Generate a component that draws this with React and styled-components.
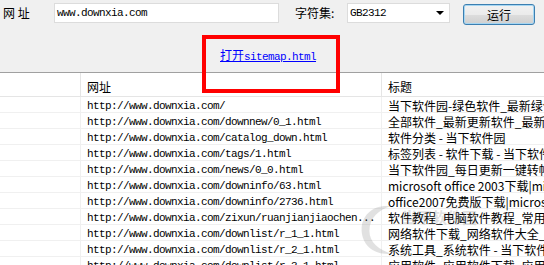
import styled, { createGlobalStyle } from 'styled-components'

const GlobalStyle = createGlobalStyle`
  html, body {
    margin: 0;
    padding: 0;
    background: #ffffff;
    overflow: hidden;
  }
`

const mono = `"Liberation Mono", "Noto Sans CJK SC", monospace`
const cjk = `"Noto Sans CJK SC", "Liberation Sans", sans-serif`

const Window = styled.div`
  position: relative;
  width: 544px;
  height: 265px;
  overflow: hidden;
  font-family: ${cjk};
  font-size: 12px;
  color: #000;
`

const TopArea = styled.div`
  background: #f0f0f0;
  height: 72px;
  display: flex;
  flex-direction: column;
`

const Toolbar = styled.div`
  display: flex;
  align-items: flex-start;
  padding: 3px 0 0 3px;
  height: 21px;
`

const Label = styled.span`
  width: ${(p) => p.w}px;
  flex-shrink: 0;
  line-height: 20px;
  font-size: 12px;
  white-space: pre;
`

const TextBox = styled.div`
  box-sizing: border-box;
  width: 225px;
  height: 20px;
  background: #fff;
  border: 1px solid #dcdcdc;
  padding-left: 2px;
  font-family: ${mono};
  font-size: 11px;
  letter-spacing: -0.6px;
  line-height: 18px;
  margin-right: 16px;
`

const Select = styled.div`
  box-sizing: border-box;
  width: 103px;
  height: 20px;
  background: #fff;
  border: 1px solid #dcdcdc;
  display: flex;
  align-items: center;
  justify-content: space-between;
  padding: 0 5px 0 2px;
  font-family: ${mono};
  font-size: 11px;
  letter-spacing: -0.6px;
  margin-right: 13px;
`

const Arrow = styled.span`
  width: 0;
  height: 0;
  border-left: 4px solid transparent;
  border-right: 4px solid transparent;
  border-top: 4px solid #000;
`

const Button = styled.button`
  box-sizing: border-box;
  width: 72px;
  height: 21px;
  margin-top: 1px;
  border: 1px solid #3c7fb1;
  border-radius: 3px;
  background: linear-gradient(#f2f2f2 0%, #ebebeb 50%, #dddddd 51%, #cfcfcf 100%);
  box-shadow: inset 0 0 0 1px #a6d6f2;
  font-family: ${cjk};
  font-size: 12px;
  padding: 0;
  color: #000;
`

const LinkRow = styled.div`
  padding: 22px 0 0 220px;
`

const Link = styled.a`
  color: #0000ff;
  text-decoration: underline;
  font-family: ${mono};
  font-size: 11px;
  letter-spacing: -0.6px;
  line-height: 14px;
  cursor: pointer;
`

const Cjk = styled.span`
  font-family: ${cjk};
  font-size: 12px;
  letter-spacing: 0;
`

const Highlight = styled.div`
  position: absolute;
  left: 202px;
  top: 35px;
  width: 138px;
  height: 58px;
  box-sizing: border-box;
  border: 4px solid #ff0000;
  pointer-events: none;
`

const Table = styled.div`
  border-top: 1px solid #a0a0a0;
`

const Row = styled.div`
  display: grid;
  grid-template-columns: 81px 301px 1fr;
  height: ${(p) => (p.header ? 24 : 16)}px;
  box-sizing: border-box;
  border-bottom: 1px solid ${(p) => (p.header ? '#e5e5e5' : '#f0f0f0')};
`

const Cell = styled.div`
  box-sizing: border-box;
  border-right: 1px solid ${(p) => (p.header ? '#e5e5e5' : '#f0f0f0')};
  padding: ${(p) => (p.header ? '6px 0 0 6px' : '3px 0 0 6px')};
  white-space: nowrap;
  line-height: ${(p) => (p.header ? 16 : 12)}px;
  font-family: ${(p) => (p.url ? mono : cjk)};
  font-size: ${(p) => (p.url ? 11 : 12)}px;
  letter-spacing: ${(p) => (p.url ? '-0.6px' : '0')};
  &:last-child {
    border-right: none;
  }
`

const Watermark = styled.div`
  position: absolute;
  left: 358px;
  top: 200px;
  display: flex;
  align-items: flex-start;
  gap: 6px;
  opacity: 0.2;
  pointer-events: none;
  color: #707070;
  font-family: ${cjk};
  font-size: 15px;
  font-weight: bold;
`

const WatermarkText = styled.span`
  margin-top: 6px;
`

const rows = [
  ['http://www.downxia.com/', '当下软件园-绿色软件_最新绿色软件下载'],
  ['http://www.downxia.com/downnew/0_1.html', '全部软件_最新更新软件_最新软件下载'],
  ['http://www.downxia.com/catalog_down.html', '软件分类 - 当下软件园'],
  ['http://www.downxia.com/tags/1.html', '标签列表 - 软件下载 - 当下软件园'],
  ['http://www.downxia.com/news/0_0.html', '当下软件园_每日更新一键转帖'],
  ['http://www.downxia.com/downinfo/63.html', 'microsoft office 2003下载|microsoft'],
  ['http://www.downxia.com/downinfo/2736.html', 'office2007免费版下载|microsoft'],
  ['http://www.downxia.com/zixun/ruanjianjiaochen...', '软件教程_电脑软件教程_常用软件'],
  ['http://www.downxia.com/downlist/r_1_1.html', '网络软件下载_网络软件大全_上网'],
  ['http://www.downxia.com/downlist/r_2_1.html', '系统工具_系统软件 - 当下软件园'],
  ['http://www.downxia.com/downlist/r_3_1.html', '应用软件_应用软件下载_应用软件'],
]

export default function App() {
  return (
    <Window>
      <GlobalStyle />
      <TopArea>
        <Toolbar>
          <Label w={51}>网 址</Label>
          <TextBox>www.downxia.com</TextBox>
          <Label w={52}>字符集:</Label>
          <Select>
            <span>GB2312</span>
            <Arrow />
          </Select>
          <Button>运行</Button>
        </Toolbar>
        <LinkRow>
          <Link>
            <Cjk>打开</Cjk>sitemap.html
          </Link>
        </LinkRow>
      </TopArea>
      <Table>
        <Row header>
          <Cell header />
          <Cell header>网址</Cell>
          <Cell header>标题</Cell>
        </Row>
        {rows.map(([url, title]) => (
          <Row key={url}>
            <Cell />
            <Cell url>{url}</Cell>
            <Cell>{title}</Cell>
          </Row>
        ))}
      </Table>
      <Highlight />
      <Watermark>
        <svg width="38" height="58" viewBox="0 0 40 60">
          <path
            d="M34 6 C14 4 2 18 4 34 C6 50 20 58 36 56 C22 52 12 44 12 32 C12 18 22 10 34 6 Z"
            fill="#707070"
          />
        </svg>
        <WatermarkText>当下软件园</WatermarkText>
      </Watermark>
    </Window>
  )
}
